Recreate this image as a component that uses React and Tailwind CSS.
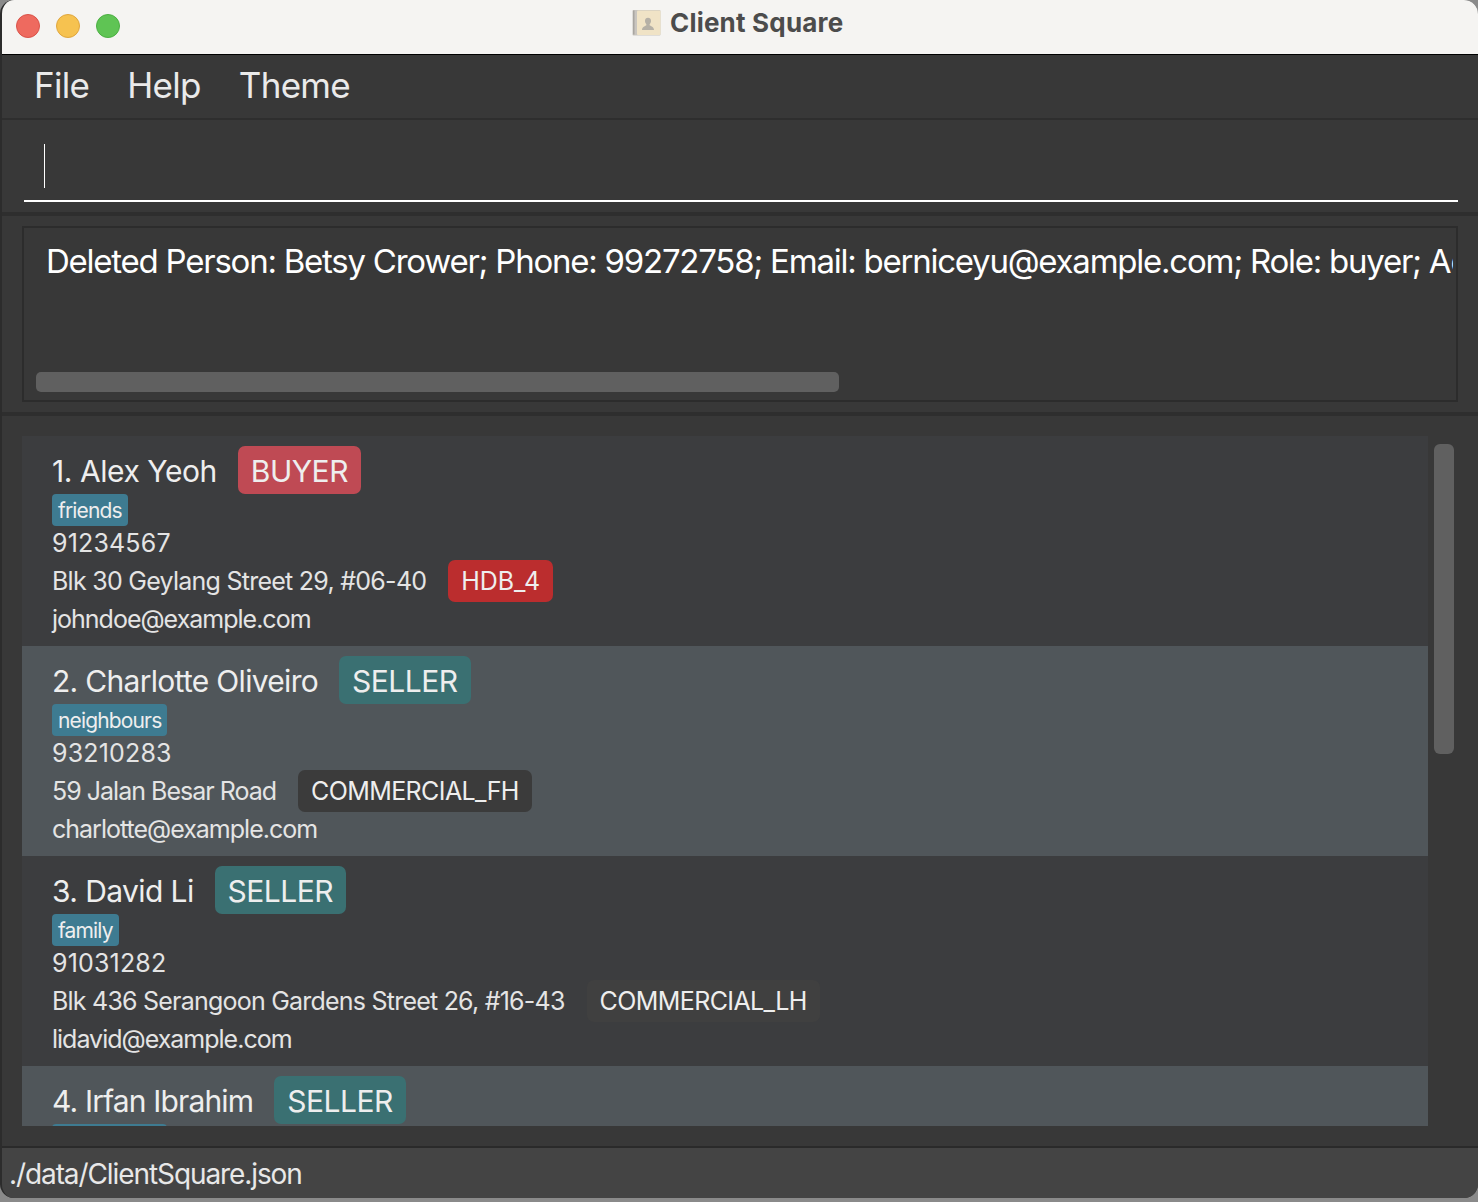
import React from "react";

const font = { fontFamily: "Inter, 'Noto Sans', sans-serif" };

function Light({ c, b }) {
  return <span className="block w-6 h-6 rounded-full border" style={{ backgroundColor: c, borderColor: b }} />;
}

function BookIcon() {
  return (
    <svg width="29" height="27" viewBox="0 0 29 27">
      <rect x="0.5" y="1" width="28" height="25.5" rx="1" fill="#c9c5bf" />
      <rect x="5" y="1.5" width="23.5" height="24.5" rx="1" fill="#f0e3c6" />
      <rect x="1" y="1.5" width="1.5" height="24" fill="#a9a6a1" />
      <path d="M10 21c0-3 2.5-3.5 4-4.5.6-.4.5-1.2 0-1.8-.8-.9-1-2-1-3 0-1.800 1.200-3 3-3s3 1.200 3 3c0 1-.2 2.100-1 3-.5.600-.6 1.400 0 1.800 1.500 1 4 1.500 4 4.500z" fill="#b5b0a6" />
    </svg>
  );
}

function Person({ alt, n, name, nameCls, role, roleBg, tag, phone, addr, addrCls, prop, propCls, propBg, email, clipped }) {
  return (
    <div className={`shrink-0 h-[210px] pl-[30px] pt-[10px] ${alt ? "bg-[#50565a]" : "bg-[#3c3d3f]"}`}>
      <div className="flex items-center gap-[21px] h-[48px]">
        <span className={`pt-[2px] text-[30px] text-[#eeeeee] ${nameCls}`}>{n}. {name}</span>
        <span className="h-[48px] pt-[2px] px-[13px] rounded-[7px] text-[30px] tracking-[-0.5px] text-[#eeeeee] flex items-center" style={{ backgroundColor: roleBg }}>{role}</span>
      </div>
      <div className="flex h-[32px]">
        <span className="h-[32px] pt-[2px] px-[6px] rounded-[4px] bg-[#3e7b91] text-[21px] tracking-[-0.85px] text-[#eeeeee] flex items-center">{tag}</span>
      </div>
      {!clipped && (
        <>
          <div className="h-[36px] flex items-center text-[25px] tracking-[0.17px] text-[#e4e4e4]">{phone}</div>
          <div className="h-[39px] flex items-center gap-[22px]">
            <span className={`text-[25px] text-[#e4e4e4] ${addrCls}`}>{addr}</span>
            <span className={`-mt-[2px] h-[42px] pt-[2px] px-[13px] rounded-[7px] text-[25px] text-[#eeeeee] flex items-center ${propCls}`} style={{ backgroundColor: propBg }}>{prop}</span>
          </div>
          <div className="h-[38px] flex items-center text-[25px] tracking-[-1px] text-[#e4e4e4]">{email}</div>
        </>
      )}
    </div>
  );
}

export default function App() {
  return (
    <div className="w-[1478px] h-[1202px] bg-[#8a8a8a] overflow-hidden" style={font}>
      <div className="h-[1198px] rounded-t-[14px] rounded-b-[14px] overflow-hidden flex flex-col bg-[#383838] border-l-2 border-r-0 border-[#2c2c2c]">
        <div className="-ml-[2px] shrink-0 h-[55px] bg-[#f5f4f2] border-b border-black flex items-center">
          <div className="flex gap-[16px] pl-4 -mt-[2px]">
            <Light c="#ee6a5f" b="#d9534a" />
            <Light c="#f6c250" b="#dfa63f" />
            <Light c="#5fc454" b="#4caf43" />
          </div>
          <div className="flex items-center gap-[9px] ml-[512px] -mt-[9px]">
            <BookIcon />
            <span className="text-[26px] font-bold text-[#4c4c4c] tracking-[0.2px]">Client Square</span>
          </div>
        </div>

        <div className="shrink-0 h-[65px] flex items-center gap-[38px] pl-[32px] pb-[2px] border-b-2 border-[#2e2e2e] text-[35px] tracking-[-0.7px] text-[#eaeaea]">
          <span>File</span>
          <span>Help</span>
          <span>Theme</span>
        </div>

        <div className="shrink-0 h-[96px] border-b-4 border-[#2e2e2e] pl-[22px] pr-[20px] pt-[24px]">
          <div className="h-[58px] border-b-2 border-white pl-[20px]">
            <div className="w-px h-[44px] bg-white" />
          </div>
        </div>

        <div className="shrink-0 h-[200px] border-b-4 border-[#2e2e2e] pl-[20px] pr-[20px] pt-[10px]">
          <div className="h-[176px] border-2 border-[#2c2c2c] flex flex-col overflow-hidden pl-[22px] pr-[3px]">
            <div className="h-[144px] pt-[9px] overflow-hidden text-[33px] tracking-[-1.24px] text-white whitespace-nowrap">
              Deleted Person: Betsy Crower; Phone: 99272758; Email: berniceyu@example.com; Role: buyer; Address: Blk 16
            </div>
            <div className="-ml-[10px] w-[803px] h-[20px] rounded-[5px] bg-[#606060]" />
          </div>
        </div>

        <div className="h-[730px] shrink-0 flex pt-[20px] pl-[20px]">
          <div className="w-[1406px] h-[690px] flex flex-col overflow-hidden">
            <Person n={1} name="Alex Yeoh" nameCls="tracking-[-0.45px]" role="BUYER" roleBg="#bf4a54" tag="friends" phone="91234567" addr="Blk 30 Geylang Street 29, #06-40" addrCls="tracking-[-0.74px]" prop="HDB_4" propCls="tracking-[-0.1px]" propBg="#bb2d2e" email="johndoe@example.com" />
            <Person alt n={2} name="Charlotte Oliveiro" nameCls="tracking-[-0.7px]" role="SELLER" roleBg="#3a7072" tag="neighbours" phone="93210283" addr="59 Jalan Besar Road" addrCls="tracking-[-0.99px]" prop="COMMERCIAL_FH" propCls="tracking-[-0.6px]" propBg="#3b3b3b" email="charlotte@example.com" />
            <Person n={3} name="David Li" nameCls="tracking-[-0.6px]" role="SELLER" roleBg="#3a7072" tag="family" phone="91031282" addr="Blk 436 Serangoon Gardens Street 26, #16-43" addrCls="tracking-[-0.78px]" prop="COMMERCIAL_LH" propCls="tracking-[-0.6px]" propBg="#404040" email="lidavid@example.com" />
            <Person alt n={4} name="Irfan Ibrahim" nameCls="tracking-[-0.85px]" role="SELLER" roleBg="#3a7072" tag="classmates" phone="" addr="" prop="" propCls="" propBg="" email="" clipped />
          </div>
          <div className="ml-[6px] mt-[8px] w-[20px] h-[310px] rounded-[6px] bg-[#606060]" />
        </div>

        <div className="shrink-0 h-[52px] border-t-2 border-[#2a2a2a] bg-[#444444] pl-[7px] pt-[2px] flex items-center text-[28px] tracking-[-1.09px] text-[#e8e8e8]">
          ./data/ClientSquare.json
        </div>
      </div>
    </div>
  );
}
